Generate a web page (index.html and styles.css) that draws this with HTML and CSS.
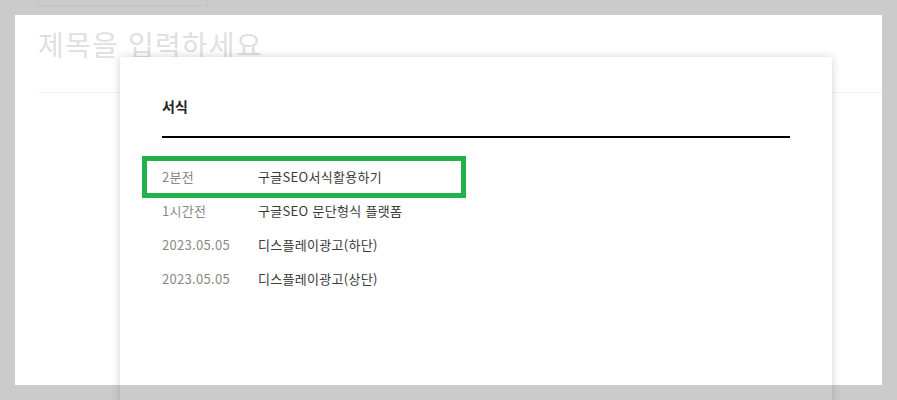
FILE: index.html
```html
<!DOCTYPE html>
<html lang="ko">
<head>
<meta charset="utf-8">
<link rel="stylesheet" href="styles.css">
</head>
<body>
<div class="page">
  <div class="topbox"></div>
  <div class="panel">
    <div class="title-input">제목을 입력하세요</div>
    <div class="divider"></div>
  </div>
  <div class="modal">
    <h2 class="modal-title">서식</h2>
    <div class="modal-rule"></div>
    <ul class="list">
      <li class="row"><span class="date">2분전</span><span class="name">구글SEO서식활용하기</span></li>
      <li class="row"><span class="date">1시간전</span><span class="name">구글SEO 문단형식 플랫폼</span></li>
      <li class="row"><span class="date">2023.05.05</span><span class="name">디스플레이광고(하단)</span></li>
      <li class="row"><span class="date">2023.05.05</span><span class="name">디스플레이광고(상단)</span></li>
    </ul>
    <div class="highlight"></div>
  </div>
</div>
</body>
</html>
```

FILE: styles.css
```css
html, body {
  margin: 0;
  padding: 0;
}
body {
  background: #cbcbcb;
  font-family: "Noto Sans CJK KR", "Noto Sans", sans-serif;
}
.page {
  position: relative;
  width: 897px;
  height: 400px;
  overflow: hidden;
}
.topbox {
  margin-left: 38px;
  width: 168px;
  height: 5px;
  border: 1px solid #c2c2c2;
  border-top: none;
}
.panel {
  margin: 9px 15px 0 15px;
  height: 370px;
  background: #fff;
  padding-top: 10px;
  box-sizing: border-box;
}
.title-input {
  margin-left: 23px;
  font-size: 28px;
  line-height: 38px;
  color: #e0e0e0;
  letter-spacing: 1.2px;
}
.divider {
  margin: 29px 0 0 23px;
  border-top: 1px solid #f3f3f3;
}
.modal {
  position: absolute;
  left: 120px;
  top: 57px;
  width: 712px;
  height: 360px;
  background: #fff;
  box-shadow: 0 0 9px rgba(0, 0, 0, 0.18);
  padding: 39px 42px 0 42px;
  box-sizing: border-box;
}
.modal::after {
  content: "";
  position: absolute;
  left: 0;
  right: 0;
  top: 328px;
  bottom: 0;
  background: #cbcbcb;
}
.modal-title {
  margin: 0;
  font-size: 14px;
  line-height: 20px;
  font-weight: bold;
  color: #222;
}
.modal-rule {
  margin-top: 20px;
  height: 2px;
  background: #000;
}
.list {
  list-style: none;
  margin: 21px 0 0 0;
  padding: 0;
}
.row {
  display: flex;
  height: 34px;
  align-items: center;
  font-size: 13px;
  letter-spacing: 0.3px;
}
.date {
  width: 96px;
  color: #888;
}
.name {
  color: #3a3a3a;
}
.highlight {
  position: absolute;
  left: 22px;
  top: 99px;
  width: 324px;
  height: 42px;
  border: 5px solid #22b14c;
  box-sizing: border-box;
}
```
